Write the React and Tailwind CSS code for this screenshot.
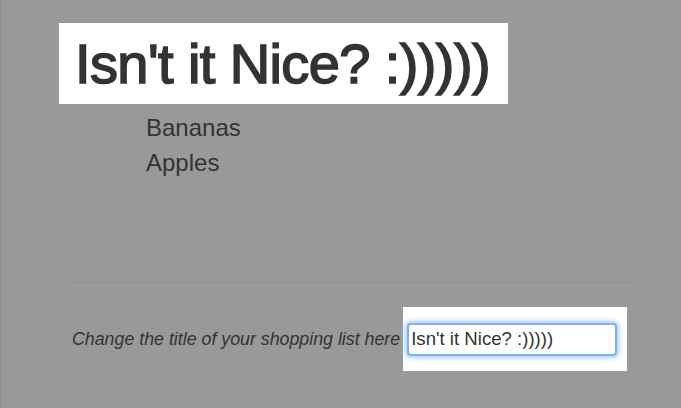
import React, { useState } from "react";

const App = () => {
  const [title, setTitle] = useState("Isn't it Nice? :)))))");
  const items = ["Bananas", "Apples"];

  return (
    <div className="min-h-[408px] w-full bg-[#999999] text-[#333333] font-['Liberation_Sans',Arial,sans-serif] border-l border-[#8c8c8c]">
      {/* Title */}
      <div className="pt-[23px] pl-[58px]">
        <h1 className="inline-flex items-center h-[81px] bg-white pl-[16px] pr-[18px] text-[56px] font-normal tracking-[-0.6px] leading-none [-webkit-text-stroke:1.6px_#333333]">
          {title}
        </h1>
      </div>

      {/* Shopping list */}
      <ul className="pl-[145px] pt-[6px] text-[24px] leading-[35px]">
        {items.map((item) => (
          <li key={item}>{item}</li>
        ))}
      </ul>

      {/* Divider */}
      <div className="ml-[71px] mr-[47px] mt-[102px] border-t border-[#8f8f8f]"></div>

      {/* Title editor */}
      <div className="flex items-center pl-[71px] pt-[24px]">
        <label className="italic text-[17.8px] pr-[3px]">
          Change the title of your shopping list here
        </label>
        <div className="flex items-center bg-white w-[224px] h-[64px] pl-[4px]">
          <input
            value={title}
            onChange={(e) => setTitle(e.target.value)}
            className="w-[210px] h-[33px] rounded-[4px] border-2 border-[#7fb0e6] shadow-[0_0_5px_2px_#a9cdf3] px-[2px] text-[18.6px] text-[#333333] outline-none bg-white font-['Liberation_Sans',Arial,sans-serif]"
          />
        </div>
      </div>
    </div>
  );
};

export default App;
